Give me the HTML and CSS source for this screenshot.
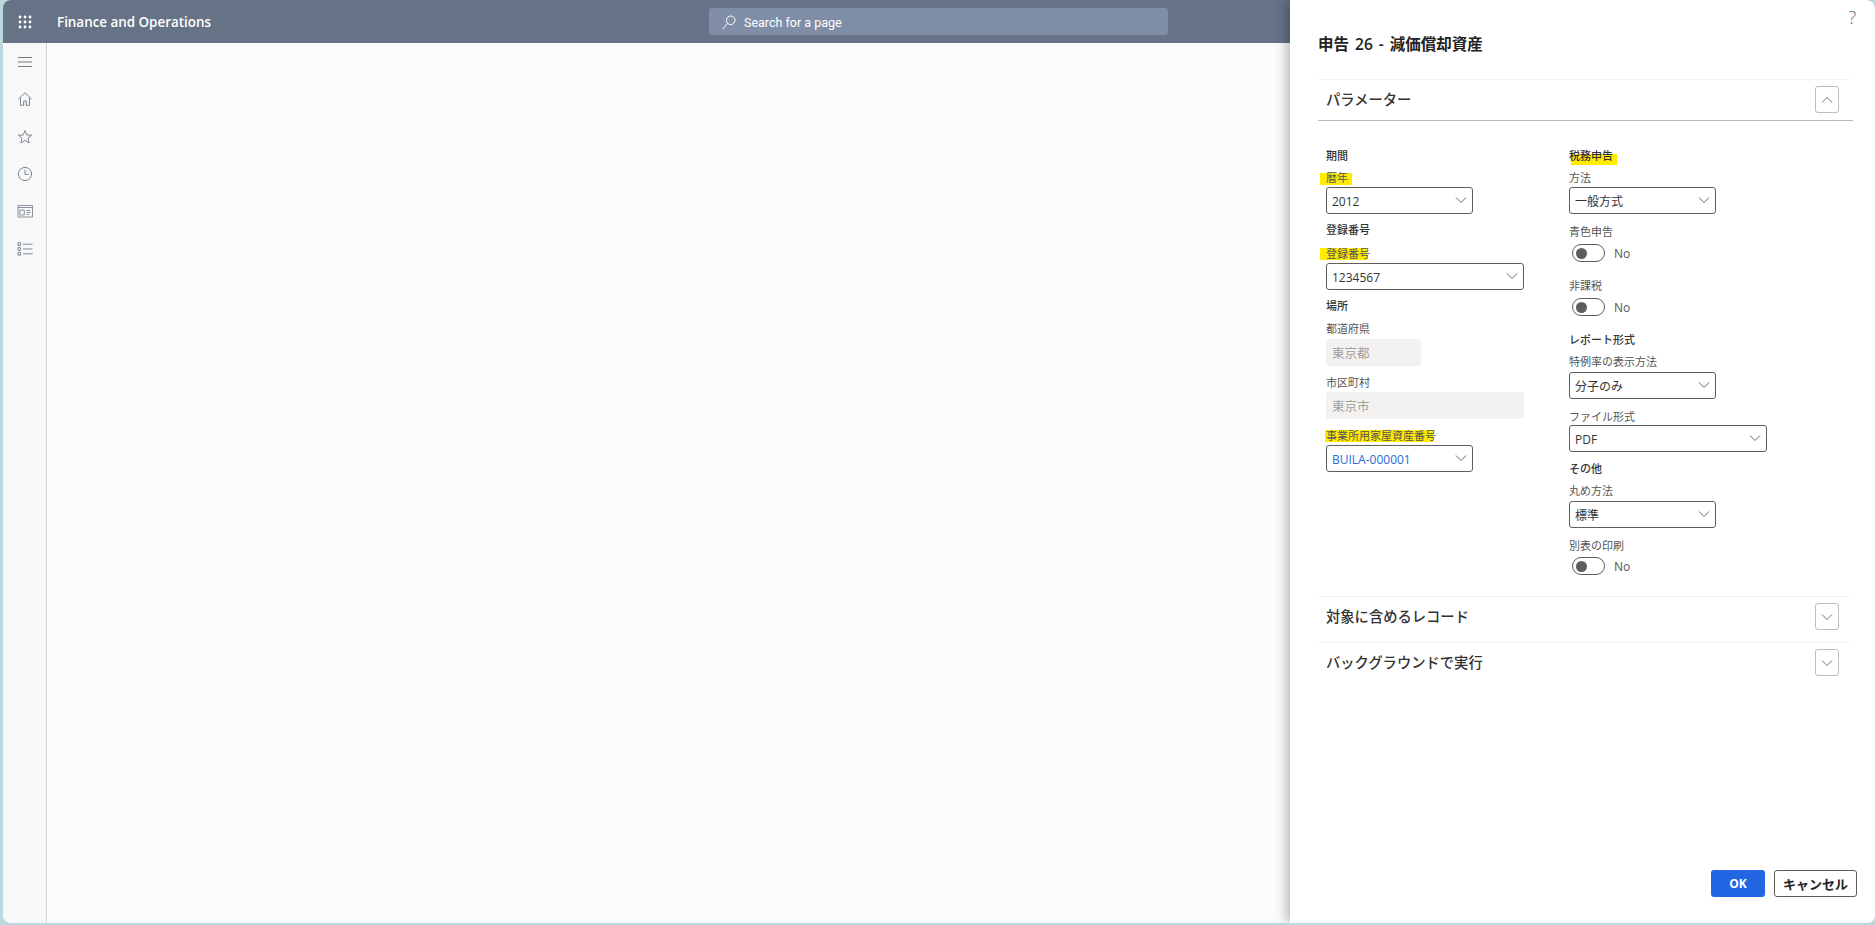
FILE: index.html
```html
<!DOCTYPE html>
<html lang="ja">
<head>
<meta charset="utf-8">
<title>Finance and Operations</title>
<link rel="stylesheet" href="styles.css">
</head>
<body>
<svg class="defs" width="0" height="0" aria-hidden="true">
  <symbol id="down" viewBox="0 0 12 8"><path d="M1 1.5 6 6.5 11 1.5" fill="none" stroke="currentColor"/></symbol>
  <symbol id="up" viewBox="0 0 12 8"><path d="M1 6.5 6 1.5 11 6.5" fill="none" stroke="currentColor"/></symbol>
</svg>
<div class="app">
  <header class="topbar">
    <button class="waffle" aria-label="Apps">
      <svg width="14" height="14" viewBox="0 0 14 14" fill="#fff"><circle cx="2" cy="2" r="1.4"/><circle cx="7" cy="2" r="1.4"/><circle cx="12" cy="2" r="1.4"/><circle cx="2" cy="7" r="1.4"/><circle cx="7" cy="7" r="1.4"/><circle cx="12" cy="7" r="1.4"/><circle cx="2" cy="12" r="1.4"/><circle cx="7" cy="12" r="1.4"/><circle cx="12" cy="12" r="1.4"/></svg>
    </button>
    <div class="brand">Finance and Operations</div>
    <div class="search">
      <svg width="14" height="15" viewBox="0 0 14 15" fill="none" stroke="#fff"><circle cx="8.7" cy="5.3" r="4.3"/><path d="M5.6 8.4 .8 14"/></svg>
      <span>Search for a page</span>
    </div>
  </header>
  <div class="main">
    <nav class="sidenav">
      <div class="navitem"><svg width="16" height="12" viewBox="0 0 16 12" stroke="#777" fill="none"><path d="M1 1.5h14M1 6h14M1 10.5h14"/></svg></div>
      <div class="navitem"><svg width="16" height="16" viewBox="0 0 16 16" stroke="#7c8894" fill="none"><path d="M1.5 8 8 1.8 14.5 8M3.5 6.5v7.8h3.2V10h2.6v4.3h3.2V6.5"/></svg></div>
      <div class="navitem"><svg width="16" height="16" viewBox="0 0 16 16" stroke="#7c8894" fill="none"><path d="M8 1.5 9.9 6.1H14.7L10.9 9.2 12.2 14 8 11.3 3.8 14 5.1 9.2 1.3 6.1H6.1Z"/></svg></div>
      <div class="navitem"><svg width="16" height="16" viewBox="0 0 16 16" stroke="#7c8894" fill="none"><circle cx="8" cy="8" r="6.6"/><path d="M8 3.8V8.5H11.5"/></svg></div>
      <div class="navitem"><svg width="16" height="13" viewBox="0 0 16 13" stroke="#8a939d" fill="none"><path d="M1 .5h14.5v11.5H1zM1 2.5h14.5"/><path d="M2.8 5h4.5v5H2.8zM9.5 5.5H13.5M9.5 7.5H13.5M9.5 9.5H12"/></svg></div>
      <div class="navitem"><svg width="16" height="14" viewBox="0 0 16 14" stroke="#7c8894" fill="none"><path d="M1 .8h2.5v2.7H1zM1 5.6h2.5v2.7H1zM1 10.4h2.5v2.7H1zM6 2.2h9.5M6 7h9.5M6 11.8h9.5"/></svg></div>
    </nav>
    <main class="canvas"></main>
  </div>

  <aside class="panel">
    <span class="help">?</span>
    <h1 class="title">申告 26 - 減価償却資産</h1>

    <section class="section">
      <div class="head head-open">
        <h2>パラメーター</h2>
        <button class="toggle-btn" aria-label="折りたたむ"><svg width="12" height="8"><use href="#up"/></svg></button>
      </div>
      <div class="form">
        <div class="col">
          <div class="group">期間</div>
          <label class="lab lab-first"><span class="mark mark-year"></span><span class="tx">暦年</span></label>
          <div class="select w147"><span>2012</span><svg width="12" height="8"><use href="#down"/></svg></div>

          <div class="group">登録番号</div>
          <label class="lab lab-mid"><span class="mark mark-reg"></span><span class="tx">登録番号</span></label>
          <div class="select w198"><span>1234567</span><svg width="12" height="8"><use href="#down"/></svg></div>

          <div class="group">場所</div>
          <label class="lab lab-gap"><span class="tx">都道府県</span></label>
          <div class="readonly w95">東京都</div>
          <label class="lab"><span class="tx">市区町村</span></label>
          <div class="readonly w198">東京市</div>
          <label class="lab"><span class="mark mark-bldg"></span><span class="tx">事業所用家屋資産番号</span></label>
          <div class="select w147 link"><span>BUILA-000001</span><svg width="12" height="8"><use href="#down"/></svg></div>
        </div>

        <div class="col">
          <div class="group"><span class="mark mark-tax"></span><span class="tx">税務申告</span></div>
          <label class="lab lab-first"><span class="tx">方法</span></label>
          <div class="select w147"><span>一般方式</span><svg width="12" height="8"><use href="#down"/></svg></div>

          <label class="lab lab-wide"><span class="tx">青色申告</span></label>
          <div class="switch"><span class="pill"></span><span>No</span></div>
          <label class="lab lab-wider"><span class="tx">非課税</span></label>
          <div class="switch"><span class="pill"></span><span>No</span></div>

          <div class="group group-far">レポート形式</div>
          <label class="lab lab-first lab-tall"><span class="tx">特例率の表示方法</span></label>
          <div class="select w147"><span>分子のみ</span><svg width="12" height="8"><use href="#down"/></svg></div>
          <label class="lab lab-wide flush"><span class="tx">ファイル形式</span></label>
          <div class="select w198"><span>PDF</span><svg width="12" height="8"><use href="#down"/></svg></div>

          <div class="group group-near">その他</div>
          <label class="lab lab-first lab-tall"><span class="tx">丸め方法</span></label>
          <div class="select w147"><span>標準</span><svg width="12" height="8"><use href="#down"/></svg></div>
          <label class="lab lab-wide lab-last"><span class="tx">別表の印刷</span></label>
          <div class="switch"><span class="pill"></span><span>No</span></div>
        </div>
      </div>
    </section>

    <section class="section">
      <div class="head">
        <h2>対象に含めるレコード</h2>
        <button class="toggle-btn" aria-label="展開"><svg width="12" height="8"><use href="#down"/></svg></button>
      </div>
    </section>
    <section class="section">
      <div class="head">
        <h2>バックグラウンドで実行</h2>
        <button class="toggle-btn" aria-label="展開"><svg width="12" height="8"><use href="#down"/></svg></button>
      </div>
    </section>

    <footer class="actions">
      <button class="btn primary">OK</button>
      <button class="btn secondary">キャンセル</button>
    </footer>
  </aside>
</div>
</body>
</html>
```
FILE: styles.css
```css
* { box-sizing: border-box; }
html, body { margin: 0; height: 100%; }
body {
  background: #bcd8df;
  font-family: "Open Sans", "Noto Sans CJK JP", sans-serif;
  overflow: hidden;
  padding: 0 0 2px 3px;
}
button { font-family: inherit; padding: 0; cursor: pointer; }
.defs { position: absolute; }

.app {
  position: relative;
  height: 100%;
  display: flex;
  flex-direction: column;
  border-radius: 8px;
  overflow: hidden;
  background: #fcfcfc;
}

.topbar {
  height: 43px;
  flex: none;
  display: flex;
  align-items: center;
  background: #667286;
  color: #fff;
}
.waffle {
  width: 43px;
  height: 43px;
  border: 0;
  background: none;
  display: flex;
  align-items: center;
  justify-content: center;
}
.brand {
  width: 663px;
  padding-left: 11px;
  font-size: 13.4px;
  font-weight: 600;
}
.search {
  width: 459px;
  height: 27px;
  display: flex;
  align-items: center;
  gap: 8px;
  padding: 2px 0 0 13px;
  background: #7f8ea6;
  border-radius: 3px;
  font-size: 12.5px;
  font-family: Roboto, sans-serif;
  color: #fff;
}

.main { flex: 1; display: flex; min-height: 0; }
.sidenav {
  width: 44px;
  flex: none;
  background: #f8f8f8;
  border-right: 1px solid #d2d2d2;
}
.navitem {
  height: 37.5px;
  display: flex;
  align-items: center;
  justify-content: center;
}
.canvas { flex: 1; background: #fcfcfc; }

.panel {
  position: absolute;
  top: 0;
  right: 0;
  bottom: 0;
  width: 585px;
  padding-left: 28px;
  display: flex;
  flex-direction: column;
  background: #fff;
  box-shadow: -3px 0 12px rgba(0, 0, 0, .3);
  color: #333;
}
.help {
  position: absolute;
  top: 4px;
  right: 19px;
  font-size: 18px;
  font-weight: 300;
  line-height: 26px;
  color: #666;
}
.title {
  margin: 34px 0 25px;
  font-size: 15.5px;
  line-height: 20px;
  font-weight: 600;
  word-spacing: 2px;
  color: #222;
}

.section { width: 531px; border-top: 1px solid #f1f1f1; }
.head {
  display: flex;
  justify-content: space-between;
  height: 45px;
  padding: 6px 10px 0 8px;
}
.head h2 {
  margin: 0;
  font-size: 14.3px;
  line-height: 27px;
  font-weight: 500;
  color: #333;
}
.head-open {
  width: 535px;
  height: 41px;
  padding-right: 14px;
  border-bottom: 1px solid #b8b8b8;
}
.toggle-btn {
  width: 24px;
  height: 27px;
  border: 1px solid #bdbdbd;
  border-radius: 3px;
  background: #fff;
  color: #707070;
  display: flex;
  align-items: center;
  justify-content: center;
}

.form {
  display: grid;
  grid-template-columns: 243px 1fr;
  padding: 19px 0 21px 8px;
}
.col { display: flex; flex-direction: column; align-items: flex-start; }

.group {
  position: relative;
  margin-top: 7px;
  padding-top: 1px;
  font-size: 11px;
  line-height: 16px;
  font-weight: 500;
  color: #333;
}
.group-far { margin-top: 15px; }
.group-near { margin-top: 8px; }

.lab {
  position: relative;
  display: block;
  margin: 9px 0 1px;
  font-size: 11px;
  line-height: 16px;
  color: #555;
}
.lab-first { margin-top: 6px; }
.lab-mid { margin-top: 8px; }
.lab-gap { margin: 7px 0 2px; }
.lab-wide { margin: 10px 0 4px; }
.lab-wider { margin: 16px 0 4px; }
.lab-tall { margin-bottom: 2px; }
.lab-last { margin-bottom: 3px; }
.flush { margin-bottom: 0; }
.tx { position: relative; }

.mark { position: absolute; height: 12px; background: #ffec00; }
.mark-year { left: -6px; top: 3px; width: 32px; }
.mark-reg { left: -6px; top: 2px; width: 47px; }
.mark-bldg { left: -1px; top: 2px; width: 108px; }
.mark-tax { left: 2px; top: 7px; width: 46px; height: 11px; }

.select {
  height: 27px;
  display: flex;
  align-items: center;
  justify-content: space-between;
  padding: 1px 5px 0 5px;
  border: 1px solid #605e5c;
  border-radius: 3px;
  background: #fff;
  font-size: 12px;
  color: #333;
}
.select svg { color: #666; margin-top: -3px; }
.link { color: #2a6bd8; }
.w95 { width: 95px; }
.w147 { width: 147px; }
.w198 { width: 198px; }

.readonly {
  height: 27px;
  display: flex;
  align-items: center;
  padding-left: 6px;
  background: #f3f2f1;
  border-radius: 3px;
  font-size: 12.5px;
  color: #a19f9d;
}

.switch {
  display: flex;
  align-items: center;
  gap: 9px;
  height: 18px;
  margin-left: 3px;
  padding-top: 0;
  font-size: 12px;
  color: #555;
}
.pill {
  position: relative;
  width: 33px;
  height: 18px;
  border: 1px solid #605e5c;
  border-radius: 9px;
}
.pill::after {
  content: "";
  position: absolute;
  left: 3px;
  top: 2.5px;
  width: 11px;
  height: 11px;
  border-radius: 50%;
  background: #605e5c;
}

.actions {
  margin-top: auto;
  display: flex;
  justify-content: flex-end;
  gap: 9px;
  padding: 0 18px 26px 0;
}
.btn { height: 27px; border-radius: 3px; }
.primary {
  width: 54px;
  border: 0;
  background: #2266e3;
  color: #fff;
  font-size: 12px;
  font-weight: 700;
}
.secondary {
  width: 83px;
  border: 1px solid #605e5c;
  background: #fff;
  color: #222;
  font-size: 13px;
  font-weight: 600;
}
```
